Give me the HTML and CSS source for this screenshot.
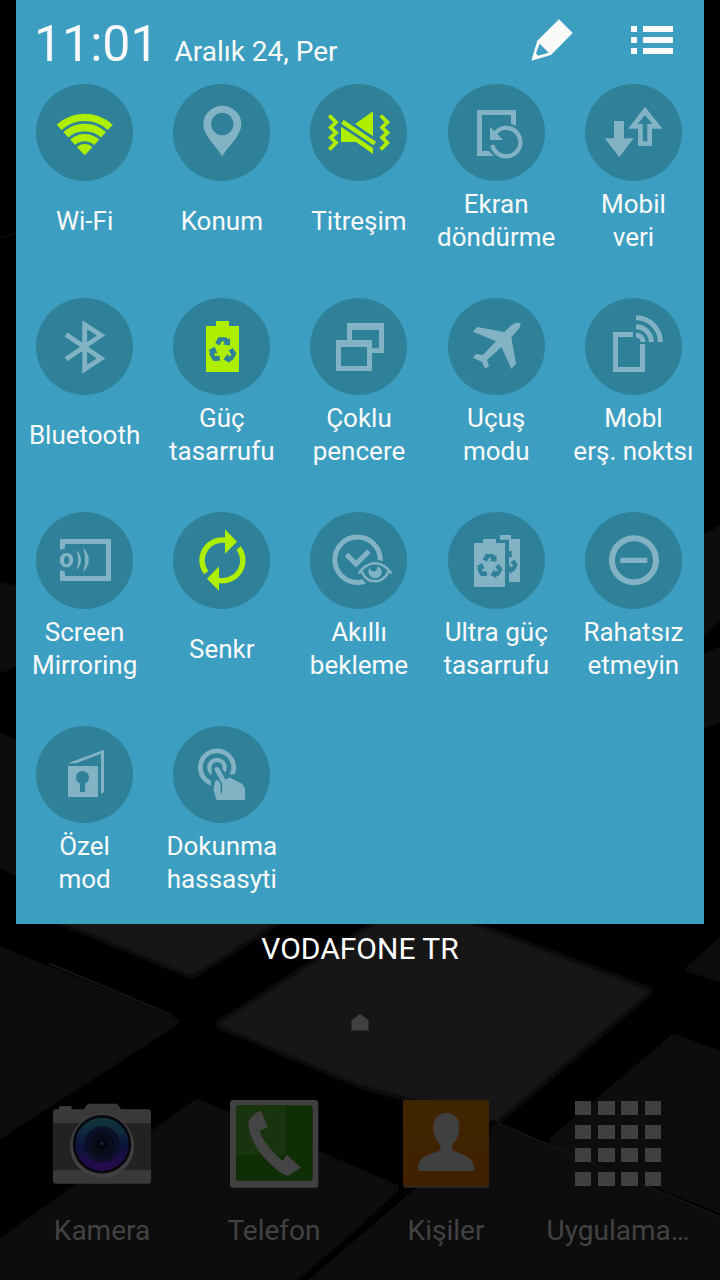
FILE: index.html
```html
<!DOCTYPE html>
<html lang="tr">
<head>
<meta charset="utf-8">
<meta name="viewport" content="width=device-width, initial-scale=1">
<title>Hızlı ayarlar</title>
<link rel="stylesheet" href="styles.css">
</head>
<body>
<svg class="defs" width="0" height="0" aria-hidden="true">
  <defs>
    <polygon id="recycle-arrow" points="-7.4,-7.4 -4.4,-13.4 3.6,-13.4 5.3,-11.4 7.3,-12.4 7.3,-5 0.2,-6 2,-7.800 -0.4,-10 -3,-5.200"/>
    <g id="recycle">
      <use href="#recycle-arrow"/>
      <use href="#recycle-arrow" transform="rotate(120)"/>
      <use href="#recycle-arrow" transform="rotate(240)"/>
    </g>
    <clipPath id="back-cell"><rect x="61" y="27" width="11" height="43"/></clipPath>
  </defs>
</svg>

<div class="screen">
  <svg class="wallpaper" viewBox="0 0 720 1280" preserveAspectRatio="xMidYMid slice" aria-hidden="true">
    <defs><filter id="soft" x="-5%" y="-5%" width="110%" height="110%"><feGaussianBlur stdDeviation="3"/></filter></defs>
    <g filter="url(#soft)">
      <polygon points="40,915 192,978 300,910" fill="#131313"/>
      <polygon points="-10,942 184,1021 -10,1146" fill="#0c0c0c"/>
      <polygon points="213,1025 400,905 440,910 655,990 497,1124 360,1087" fill="#121212"/>
      <polygon points="197,1098 403,1187 290,1290 -10,1290 -10,1245" fill="#0b0b0b"/>
      <polygon points="497,1124 730,1222 730,1290 296,1290 415,1189" fill="#0e0e0e"/>
      <polygon points="673,1033 730,1054 730,1217 546,1141" fill="#0a0a0a"/>
      <polygon points="682,970 730,928 730,986" fill="#0c0c0c"/>
      <polygon points="-10,450 30,428 30,520 -10,480" fill="#060606"/>
      <polygon points="-10,580 30,588 30,662 -10,678" fill="#080808"/>
      <polygon points="-10,728 30,745 30,802 -10,812" fill="#090909"/>
      <polygon points="-10,815 30,806 30,885 -10,862" fill="#0a0a0a"/>
      <polygon points="700,410 730,410 730,490 700,480" fill="#050505"/>
      <polygon points="700,536 730,520 730,610 700,640" fill="#090909"/>
      <polygon points="700,655 730,642 730,720 700,730" fill="#0a0a0a"/>
    </g>
    <path d="M50 964 172 1015M497 1123 720 1217" fill="none" stroke="#131313" stroke-width="2"/>
    <path d="M495 1122 360 1228 298 1280" fill="none" stroke="#040404" stroke-width="2"/>
    <path d="M0 238 16 233" stroke="#0a0a0a" stroke-width="2"/>
  </svg>

  <main class="panel">
    <header class="header">
      <div class="clock">
        <time class="time">11:01</time>
        <span class="date">Aralık 24, Per</span>
      </div>
      <div class="actions">
        <button class="action" type="button" aria-label="Düzenle">
          <svg viewBox="0 0 44 44"><path fill-rule="evenodd" d="M29 1.3 42.7 15 21 37 1.3 42.7 7.3 22.7ZM9.7 25.7 6 35.3 8.3 37.7 18.7 34.7Z"/></svg>
        </button>
        <button class="action" type="button" aria-label="Liste">
          <svg viewBox="0 0 44 44"><path d="M1 8h6v6H1zM13 8h30v6H13zM1 19h6v6H1zM13 19h30v6H13zM1 30h6v6H1zM13 30h30v6H13z"/></svg>
        </button>
      </div>
    </header>

    <section class="toggles" aria-label="Ayarlar">
      <button class="toggle on" type="button" aria-pressed="true">
        <svg class="disc" viewBox="0 0 97 97"><g class="line" stroke-width="7.4"><path d="M23.1 43.4A37.8 37.8 0 0 1 74.3 43.4"/><path d="M29.9 50.8A27.8 27.8 0 0 1 67.5 50.8"/><path d="M36.7 58.3A17.7 17.7 0 0 1 60.7 58.3"/></g><path d="M48.7 71.3 41 63.2A11 11 0 0 1 56.4 63.2Z"/></svg>
        <span class="label">Wi-Fi</span>
      </button>
      <button class="toggle" type="button" aria-pressed="false">
        <svg class="disc" viewBox="0 0 97 97"><path fill-rule="evenodd" d="M49.3 72.5C44 62.5 30.3 52 30.3 40A19 18.2 0 0 1 68.3 40C68.3 52 54.6 62.5 49.3 72.5ZM49.3 28.8a11.2 11.2 0 1 0 .01 0Z"/></svg>
        <span class="label">Konum</span>
      </button>
      <button class="toggle on" type="button" aria-pressed="true">
        <svg class="disc" viewBox="0 0 97 97"><path class="line" stroke-width="3.8" d="M19.3 31.5 26 38.3 20.7 43.5 26 48.7 20.7 53.5 26 58.7 19.3 65.5M70.7 31.5 77.4 38.3 72.1 43.5 77.4 48.7 72.1 53.5 77.4 58.7 70.7 65.5"/><path d="M45 40 63 27.3V52.3ZM33.5 35.7 66 57.7 63.7 61.3 31.3 39.7ZM31 42.7 63 64V70L46 58H31Z"/></svg>
        <span class="label">Titreşim</span>
      </button>
      <button class="toggle" type="button" aria-pressed="false">
        <svg class="disc" viewBox="0 0 97 97"><path d="M29 26H68V41.8L63 40V31H34V67H41L45.5 72H29ZM42 42.7V56H55.3Z"/><path class="line" stroke-width="4.3" d="M44.3 61A14.2 14.2 0 1 0 47.5 48.8"/></svg>
        <span class="label">Ekran<br>döndürme</span>
      </button>
      <button class="toggle" type="button" aria-pressed="false">
        <svg class="disc" viewBox="0 0 97 97"><path d="M29 37H39V54.3H48.7L34.3 73 19.7 54.3H29Z"/><path fill-rule="evenodd" d="M60 23 77.7 44.7H67V62H53V44.7H43ZM60 31 52.7 40H57.7V57.3H62.3V40H67.3Z"/></svg>
        <span class="label">Mobil<br>veri</span>
      </button>

      <button class="toggle" type="button" aria-pressed="false">
        <svg class="disc" viewBox="0 0 97 97"><path class="line" stroke-width="4.8" d="M30 36.6 65 60.4 48.7 71.3V26.7L65 37.4 30 61.2"/></svg>
        <span class="label">Bluetooth</span>
      </button>
      <button class="toggle on" type="button" aria-pressed="true">
        <svg class="disc" viewBox="0 0 97 97"><path d="M43 23H56V28H66V74H33V28H43Z"/><use class="cut" href="#recycle" transform="translate(49.7 52.6)"/></svg>
        <span class="label">Güç<br>tasarrufu</span>
      </button>
      <button class="toggle" type="button" aria-pressed="false">
        <svg class="disc" viewBox="0 0 97 97"><path fill-rule="evenodd" d="M37 25H74V55H62V50.3H69V32H42V42H37ZM26 42H62V73H26ZM31 49V68H57V49Z"/></svg>
        <span class="label">Çoklu<br>pencere</span>
      </button>
      <button class="toggle" type="button" aria-pressed="false">
        <svg class="disc" viewBox="0 0 97 97"><path d="M72.3 25Q73 27.5 71 30.5L63.3 39.3 68 66 63.3 71 53.5 49 39 62 41 68 37.3 71 33.7 63.7 25 59.7 28 56 35 56.9 48 43.3 25 33.7 29 29 56.3 34 63.7 27Q68 24 72.3 25Z"/></svg>
        <span class="label">Uçuş<br>modu</span>
      </button>
      <button class="toggle" type="button" aria-pressed="false">
        <svg class="disc" viewBox="0 0 97 97"><path d="M28 34H48V39H33V69H55V46H60V74H28Z"/><path class="line" stroke-width="5" d="M51 19.7A24.3 24.3 0 0 1 75.3 44M51 28.7A15.3 15.3 0 0 1 66.3 44M51 37A7 7 0 0 1 58 44"/></svg>
        <span class="label">Mobl<br>erş. noktsı</span>
      </button>

      <button class="toggle" type="button" aria-pressed="false">
        <svg class="disc" viewBox="0 0 97 97"><path fill-rule="evenodd" d="M24 27H75V69H24V58L29 59.5V64H70V32H29V36.5L24 38ZM30.7 41C39.500 41 39.500 55.300 30.700 55.300 21.500 55.300 21.500 41 30.700 41ZM30.700 44C27 44 27 52.300 30.700 52.300 34 52.300 34 44 30.700 44Z"/><path d="M40.500 38Q49.500 48 40.500 58 43.500 48 40.500 38ZM47 35.500Q58.500 48 47 60.500 51 48 47 35.500Z"/></svg>
        <span class="label">Screen<br>Mirroring</span>
      </button>
      <button class="toggle on" type="button" aria-pressed="true">
        <svg class="disc" viewBox="0 0 97 97"><path class="line" stroke-width="5.4" d="M33.2 60.7A20.3 20.3 0 0 1 53 28.4M65.6 36A20.3 20.3 0 0 1 45.5 68.3"/><path d="M52 17.3 64 29.7 52 41.7ZM46 54.3V78.7L34 66.7Z"/></svg>
        <span class="label">Senkr</span>
      </button>
      <button class="toggle" type="button" aria-pressed="false">
        <svg class="disc" viewBox="0 0 97 97"><circle class="line" stroke-width="5" cx="47.5" cy="47.7" r="22.7"/><path class="line" stroke-width="5" d="M36.5 42.5 46 52 59 39.3"/><path class="cut" d="M45.5 60Q55 47.5 65 47.5T84.5 60Q76 73.5 65 73.5 59 73.5 54.5 70L50 64Z"/><path class="line" stroke-width="2.6" d="M48.5 61.5Q56 51.3 65 51.3T81.5 61.5M51.5 59.5Q56 69.3 65 69.3T78.5 59.5"/><path d="M60 55Q59 58 63 59.5 67 60 67.500 54.300 72 56 71.700 60.500 70.500 66 65 66 59 65.500 58.300 60Q58.300 57 60 55Z"/></svg>
        <span class="label">Akıllı<br>bekleme</span>
      </button>
      <button class="toggle" type="button" aria-pressed="false">
        <svg class="disc" viewBox="0 0 97 97"><path d="M35 27H48V31H57V75H26V31H35ZM52 23H63V27H72V70H61V27.7H52Z"/><use class="cut" href="#recycle" transform="translate(41.7 54.5) scale(.93)"/><g clip-path="url(#back-cell)"><use class="cut" href="#recycle" transform="translate(57 50) scale(.93)"/></g></svg>
        <span class="label">Ultra güç<br>tasarrufu</span>
      </button>
      <button class="toggle" type="button" aria-pressed="false">
        <svg class="disc" viewBox="0 0 97 97"><circle class="line" stroke-width="6" cx="49" cy="48.3" r="22"/><path d="M35.3 45.7H62.3V51H35.3Z"/></svg>
        <span class="label">Rahatsız<br>etmeyin</span>
      </button>

      <button class="toggle" type="button" aria-pressed="false">
        <svg class="disc" viewBox="0 0 97 97"><path d="M32 37.3 68 23.7V66L65 68V27.7L40 37.3ZM32 40H62V71H32Z"/><path class="cut" d="M44 57.7A6.6 6.6 0 1 1 49 57.7V66H44Z"/></svg>
        <span class="label">Özel<br>mod</span>
      </button>
      <button class="toggle" type="button" aria-pressed="false">
        <svg class="disc" viewBox="0 0 97 97"><circle class="line" stroke-width="4.7" cx="44" cy="41.5" r="16.7"/><circle class="line" stroke-width="4.2" cx="44" cy="41.5" r="7.7"/><path class="cut" d="M39 42Q40 37 45.5 38L54 49 63 48 75 60V76H41L37.5 55Z"/><path d="M41.3 43.5Q41.5 40.5 44.3 41 46 41.5 47 43.5L52.3 53.5 57 51.5 67.5 57Q71.5 59.5 72 63.5V74H43.5L40.5 64 42.3 54.5Q46 53 47.5 58.5L47.600 63.500 48 69Q50 65 49 57.500Z"/></svg>
        <span class="label">Dokunma<br>hassasyti</span>
      </button>
    </section>
  </main>

  <p class="carrier">VODAFONE TR</p>

  <svg class="page-mark" viewBox="0 0 18 18" aria-hidden="true"><path d="M1 7 9 1 17.5 7V17.5H.5V7Z"/></svg>

  <nav class="dock">
    <a class="app" href="#kamera">
      <svg viewBox="0 0 100 90" aria-hidden="true">
        <defs><linearGradient id="lens" x1="0" y1="0" x2="0" y2="1"><stop offset="0" stop-color="#103539"/><stop offset=".25" stop-color="#0d2a3e"/><stop offset=".55" stop-color="#0d123c"/><stop offset="1" stop-color="#2a0a50"/></linearGradient></defs>
        <path fill="#393939" d="M4 10.3H7V8.5Q7 7 8.5 7H18.5Q19.7 7 19.7 8.5V10.3H32Q35 5 36.5 4.7H64.5Q66 5 69 10.3H96Q99 10.3 99 13.5V81.5Q99 84.7 96 84.7H4Q1 84.7 1 81.5V13.5Q1 10.3 4 10.3Z"/>
        <path fill="#222" d="M1 24.3H99V71H1Z"/>
        <path fill="#393939" d="M33 20H67L72 30H28Z"/>
        <circle cx="50" cy="47" r="32" fill="#404040"/>
        <circle cx="50" cy="45.3" r="29.3" fill="#08080f"/>
        <circle cx="50" cy="45.3" r="26.5" fill="url(#lens)"/>
        <circle cx="50" cy="45.3" r="18" fill="#0c1026"/>
        <circle cx="50" cy="45.3" r="12" fill="#090a1a"/>
        <circle cx="50" cy="45.3" r="5" fill="#04040a"/>
        <circle cx="50" cy="44.5" r="2" fill="#13202e"/>
      </svg>
      <span class="app-name">Kamera</span>
    </a>
    <a class="app" href="#telefon">
      <svg viewBox="0 0 100 90" aria-hidden="true">
        <rect x="6" y="1" width="88.3" height="87.7" rx="3" fill="#404040"/>
        <rect x="12" y="6.3" width="76.7" height="75.7" rx="3" fill="#102e05"/>
        <path fill="#18340e" d="M15 6.3H62V56H12V9Z"/>
        <path fill="#444" d="M37 11.7 43.7 28.3 35.7 31.7Q38 43 58.7 62L63 56 77 68.7 64.3 76.7Q60 77 52 70 25 48 24.3 22 29 14 37 11.7Z"/>
      </svg>
      <span class="app-name">Telefon</span>
    </a>
    <a class="app" href="#kisiler">
      <svg viewBox="0 0 100 90" aria-hidden="true">
        <defs><linearGradient id="card" x1="0" y1="0" x2="0" y2="1"><stop offset="0" stop-color="#402600"/><stop offset="1" stop-color="#402000"/></linearGradient></defs>
        <rect x="7" y="1" width="86" height="87.7" rx="2" fill="#33281c"/>
        <rect x="7" y="1" width="86" height="85.5" rx="2" fill="url(#card)"/>
        <path fill="#404040" d="M50.3 14C59 14 63.5 20 63.3 29 63 37 59.5 43 56.3 46V50C58 55 78 54 78 69Q78 72 76 72H24Q22 72 22 69C22 54 42.5 55 44.5 50V46C41 43 37.5 37 37.3 29 37 20 42 14 50.3 14Z"/>
      </svg>
      <span class="app-name">Kişiler</span>
    </a>
    <a class="app" href="#uygulamalar">
      <svg viewBox="0 0 100 90" aria-hidden="true">
        <path fill="#404040" d="M7 2h16v14H7zM30 2h17v14H30zM53 2h17v14H53zM77 2h16v14H77zM7 26h16v14H7zM30 26h17v14H30zM53 26h17v14H53zM77 26h16v14H77zM7 49h16v14H7zM30 49h17v14H30zM53 49h17v14H53zM77 49h16v14H77zM7 73h16v14H7zM30 73h17v14H30zM53 73h17v14H53zM77 73h16v14H77z"/>
      </svg>
      <span class="app-name">Uygulama…</span>
    </a>
  </nav>
</div>
</body>
</html>
```
FILE: styles.css
```css
* {
  box-sizing: border-box;
}

body {
  margin: 0;
  background: #000;
  font-family: Roboto, "Noto Sans", sans-serif;
}

button {
  padding: 0;
  border: 0;
  background: none;
  color: inherit;
  font: inherit;
  cursor: pointer;
}

svg {
  display: block;
}

.defs {
  position: absolute;
}

.screen {
  position: relative;
  display: flex;
  flex-direction: column;
  min-height: 100vh;
}

.wallpaper {
  position: absolute;
  inset: 0;
  width: 100%;
  height: 100%;
}

.panel {
  position: relative;
  margin: 0 16px;
  padding-bottom: 28px;
  background: #3c9fc1;
  color: #fafafa;
}

.header {
  display: flex;
  align-items: center;
  justify-content: space-between;
  height: 80px;
  margin-bottom: 4px;
  padding: 0 30px 0 18px;
}

.clock {
  display: flex;
  align-items: baseline;
  gap: 16px;
  padding-top: 8px;
}

.time {
  font-size: 50px;
  font-weight: 400;
  line-height: 60px;
}

.date {
  font-size: 28px;
  line-height: 36px;
}

.actions {
  display: flex;
  gap: 56px;
}

.action {
  width: 44px;
  height: 44px;
  fill: #fafafa;
}

.toggles {
  display: grid;
  grid-template-columns: repeat(5, 1fr);
  row-gap: 44px;
  padding-right: 2px;
}

.toggle {
  display: flex;
  flex-direction: column;
  align-items: center;
  gap: 7px;
  color: #fafafa;
}

.disc {
  width: 97px;
  height: 97px;
  border-radius: 50%;
  background: #2f8099;
  color: #82b3c4;
  fill: currentColor;
}

.on .disc {
  color: #aeee00;
}

.line {
  fill: none;
  stroke: currentColor;
}

.cut {
  fill: #2f8099;
}

.label {
  display: flex;
  flex-direction: column;
  justify-content: center;
  min-height: 66px;
  font-size: 26px;
  line-height: 33px;
  text-align: center;
  white-space: nowrap;
}

.carrier {
  position: relative;
  margin: 5px 0 0;
  color: #fff;
  font-size: 30px;
  line-height: 40px;
  text-align: center;
}

.page-mark {
  position: relative;
  width: 18px;
  height: 18px;
  margin: 44px auto 0;
  fill: #404040;
}

.dock {
  position: relative;
  display: grid;
  grid-template-columns: repeat(4, 1fr);
  margin-top: auto;
  padding: 64px 16px 31px;
}

.app {
  display: flex;
  flex-direction: column;
  align-items: center;
  gap: 24px;
  color: #424242;
  font-size: 28px;
  line-height: 36px;
  text-decoration: none;
  white-space: nowrap;
}

.app svg {
  width: 100px;
  height: 90px;
}
```
